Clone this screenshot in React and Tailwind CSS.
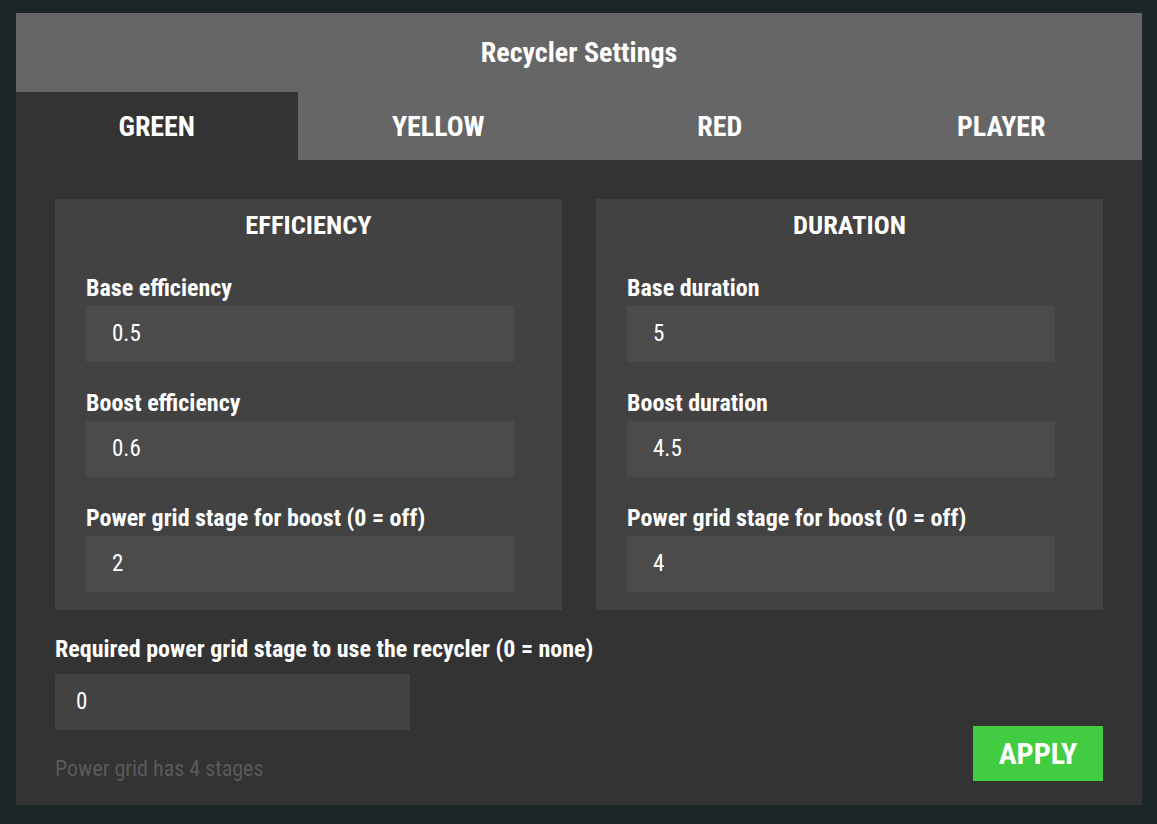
import { useState } from "react";

const tabs = ["GREEN", "YELLOW", "RED", "PLAYER"];

// one labelled number box inside a settings card
function Field({ label, value, last }) {
  return (
    <div className={last ? "" : "mb-[29px]"}>
      <div className="text-[24px] leading-[24px] font-bold text-white mb-[6px]">{label}</div>
      <div className="w-[428px] h-[56px] bg-[#4b4b4b] flex items-center pl-[26px] text-[23px] text-white">
        {value}
      </div>
    </div>
  );
}

function Card({ title, fields }) {
  return (
    <div className="bg-[#424242] pt-[11px] pb-[18px] pl-[31px]">
      <div className="text-center text-[26.5px] leading-[30px] font-bold text-white -ml-[31px] mb-[36px]">
        {title}
      </div>
      {fields.map((f, i) => (
        <Field key={f.label} label={f.label} value={f.value} last={i === fields.length - 1} />
      ))}
    </div>
  );
}

export default function App() {
  const [active, setActive] = useState(0);

  return (
    <div
      className="w-[1157px] h-[824px] bg-[#1c2628] pt-[13px] pl-[16px]"
      style={{ fontFamily: '"Roboto Condensed", "Roboto", "Liberation Sans", sans-serif' }}
    >
      <div className="w-[1126px] bg-[#333333] flex flex-col">
        {/* header */}
        <div className="h-[79px] shrink-0 bg-[#666666] flex items-center justify-center text-[28px] font-bold text-white">
          Recycler Settings
        </div>

        {/* tabs */}
        <div className="grid grid-cols-4 h-[68px] shrink-0">
          {tabs.map((t, i) => (
            <button
              key={t}
              onClick={() => setActive(i)}
              className={`flex items-center justify-center pt-[2px] text-[28px] font-bold text-white ${
                active === i ? "bg-[#333333]" : "bg-[#666666]"
              }`}
            >
              {t}
            </button>
          ))}
        </div>

        <div className="px-[39px] pt-[39px] pb-[24px]">
          <div className="grid grid-cols-2 gap-[34px]">
            <Card
              title="EFFICIENCY"
              fields={[
                { label: "Base efficiency", value: "0.5" },
                { label: "Boost efficiency", value: "0.6" },
                { label: "Power grid stage for boost (0 = off)", value: "2" },
              ]}
            />
            <Card
              title="DURATION"
              fields={[
                { label: "Base duration", value: "5" },
                { label: "Boost duration", value: "4.5" },
                { label: "Power grid stage for boost (0 = off)", value: "4" },
              ]}
            />
          </div>

          <div className="flex items-end justify-between">
            <div>
              <div className="mt-[27px] text-[24px] leading-[24px] font-bold text-white">
                Required power grid stage to use the recycler (0 = none)
              </div>
              <div className="mt-[13px] w-[355px] h-[56px] bg-[#424242] flex items-center pl-[21px] text-[23px] text-white">
                0
              </div>
              <div className="mt-[27px] text-[22px] leading-[24px] text-[#5a5a5a]">Power grid has 4 stages</div>
            </div>
            <button className="w-[130px] h-[55px] bg-[#41cc41] text-white text-[30px] font-bold flex items-center justify-center">
              APPLY
            </button>
          </div>
        </div>
      </div>
    </div>
  );
}
